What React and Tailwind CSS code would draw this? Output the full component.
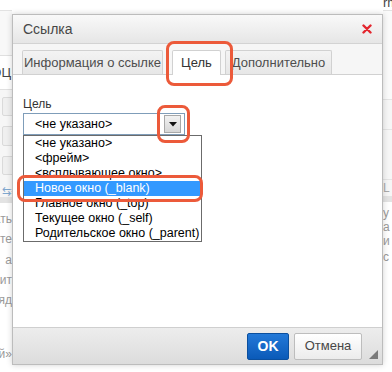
const options = [
  '<не указано>',
  '<фрейм>',
  '<всплывающее окно>',
  'Новое окно (_blank)',
  'Главное окно (_top)',
  'Текущее окно (_self)',
  'Родительское окно (_parent)',
];

function PageBehind() {
  return (
    <div className="flex h-full justify-between text-[12px] text-[#9a9a9a]">
      {/* left edge of the page, mostly under the dialog */}
      <div className="w-[12px] overflow-hidden flex flex-col">
        <div className="h-[11px] shrink-0 border-b border-[#e2e2e2] bg-white" />
        <div className="h-[45px] shrink-0 border-b border-[#e0e0e0] bg-[#f8f8f8]" />
        <div className="h-[34px] shrink-0 border-b border-[#e0e0e0] flex items-center justify-end pr-[1px] text-[13px] text-[#444] whitespace-nowrap">
          ОЦ
        </div>
        <div className="h-[107px] shrink-0 bg-[#f6f6f6] flex flex-col gap-[10px] pt-[7px] pl-[2px]">
          <div className="h-[20px] w-[12px] rounded-[2px] border border-[#dadada] bg-[#efefef]" />
          <div className="h-[20px] w-[12px] rounded-[2px] border border-[#dadada] bg-[#efefef]" />
          <div className="h-[20px] w-[12px] rounded-[2px] border border-[#dadada] bg-[#efefef]" />
          <div className="text-[11px] leading-[12px] text-[#7fa7cf]">⇆≡</div>
        </div>
        <div className="h-[6px] shrink-0 bg-[#e3e3e3]" />
        <div className="flex flex-col items-end pt-[6px] leading-[20px] whitespace-nowrap">
          <div>ать</div>
          <div>те</div>
          <div className="mt-[1px]">а</div>
          <div>нит</div>
          <div>яд</div>
          <div className="mt-[34px]">й»</div>
        </div>
      </div>

      {/* right edge of the page */}
      <div className="w-[9px] overflow-hidden flex flex-col">
        <div className="h-[11px] shrink-0 border-b border-[#e2e2e2] text-[13px] leading-[6px] text-[#444] whitespace-nowrap">
          rmatio
        </div>
        <div className="h-[89px] shrink-0 border-b border-[#e4e4e4] bg-[#fafafa]" />
        <div className="h-[30px] shrink-0 border-b border-[#e4e4e4] bg-[#f6f6f6]" />
        <div className="h-[50px] shrink-0 border-b border-[#e4e4e4] bg-[#f6f6f6]" />
        <div className="h-[16px] shrink-0 bg-[#f6f6f6] leading-[16px] text-[#aaa]">L</div>
        <div className="h-[6px] shrink-0 bg-[#e3e3e3]" />
        <div className="flex flex-col pt-[4px] leading-[14px] whitespace-nowrap">
          <div>y</div>
          <div>a</div>
          <div>и</div>
          <div className="mt-[2px]">c</div>
        </div>
      </div>
    </div>
  );
}

function Highlight({ className }) {
  return (
    <div className={`absolute border-[3px] border-[#ec5a3a] rounded-[8px] pointer-events-none ${className}`} />
  );
}

export default function App() {
  return (
    <div className="relative w-[392px] h-[372px] overflow-hidden bg-white font-['Liberation_Sans',Arial,sans-serif]">
      <PageBehind />

      {/* link dialog */}
      <div className="absolute left-[12px] top-[14px] w-[371px] h-[351px] flex flex-col border border-[#bcbcbc] bg-white shadow-[0_0_6px_rgba(0,0,0,0.18)]">
        <div className="h-[29px] shrink-0 flex items-center justify-between pl-[10px] pr-[10px] border-b border-[#d3d3d3] bg-gradient-to-b from-[#f9f9f9] to-[#e6e6e6]">
          <span className="text-[14px] text-[#474747]">Ссылка</span>
          <svg width="10" height="10" viewBox="0 0 10 10">
            <path d="M1.5 1.5 L8.5 8.5 M8.5 1.5 L1.5 8.5" stroke="#e3262e" strokeWidth="2.4" strokeLinecap="round" />
          </svg>
        </div>

        <div className="h-[31px] shrink-0 flex items-end pl-[9px] border-b border-[#d1d1d1] bg-[#f6f6f6]">
          <div className="h-[24px] w-[141px] flex items-center justify-center border border-b-0 border-[#d1d1d1] rounded-t-[2px] bg-gradient-to-b from-[#f3f3f3] to-[#e7e7e7] text-[13px] text-[#4d4d4d] whitespace-nowrap">
            Информация о ссылке
          </div>
          <div className="h-[25px] w-[49px] -mb-px ml-[9px] flex items-center justify-center border border-b-0 border-[#d1d1d1] rounded-t-[2px] bg-white text-[13px] text-[#333]">
            Цель
          </div>
          <div className="h-[24px] w-[107px] ml-[4px] flex items-center justify-center border border-b-0 border-[#d1d1d1] rounded-t-[2px] bg-gradient-to-b from-[#f3f3f3] to-[#e7e7e7] text-[13px] text-[#4d4d4d] whitespace-nowrap">
            Дополнительно
          </div>
        </div>

        <div className="flex-1 pt-[22px] pl-[10px]">
          <div className="text-[12px] leading-[14px] text-[#333] mb-[2px]">Цель</div>
          <div className="w-[162px] h-[22px] flex items-center justify-between border border-[#7f9db9] bg-white pl-[11px] pr-[3px]">
            <span className="text-[12.5px] text-black">&lt;не указано&gt;</span>
            <div className="w-[17px] h-[18px] flex items-center justify-center border border-[#a8a8a8] bg-gradient-to-b from-[#f2f2f2] to-[#d6d6d6]">
              <svg width="8" height="5" viewBox="0 0 8 5">
                <path d="M0 0 H8 L4 4.5 Z" fill="#111" />
              </svg>
            </div>
          </div>
        </div>

        <div className="h-[37px] shrink-0 relative flex items-center justify-end gap-[5px] pr-[20px] border-t border-[#cfcfcf] bg-gradient-to-b from-[#ededed] to-[#dcdcdc]">
          <button className="h-[27px] w-[42px] rounded-[2px] border border-[#0b4f9e] bg-gradient-to-b from-[#2379d8] to-[#0a5ab8] text-[14px] font-bold text-white">
            OK
          </button>
          <button className="h-[27px] w-[68px] rounded-[2px] border border-[#bdbdbd] bg-gradient-to-b from-white to-[#ececec] text-[13px] text-[#474747]">
            Отмена
          </button>
          <svg className="absolute right-[4px] bottom-[5px]" width="9" height="9" viewBox="0 0 9 9">
            <path d="M9 0 V9 H0 Z" fill="#7a7a7a" />
          </svg>
        </div>
      </div>

      {/* open native-style dropdown list */}
      <div className="absolute left-[23px] top-[135px] w-[179px] border border-[#6b6b6b] bg-white">
        {options.map((o, i) => (
          <div
            key={o}
            className={`h-[15px] pl-[11px] text-[12.5px] leading-[15px] whitespace-nowrap ${
              i === 3 ? 'bg-[#3399ff] text-white' : 'text-black'
            }`}
          >
            {o}
          </div>
        ))}
      </div>

      {/* orange callouts */}
      <Highlight className="left-[166px] top-[41px] w-[67px] h-[45px]" />
      <Highlight className="left-[157px] top-[105px] w-[33px] h-[38px]" />
      <Highlight className="left-[17px] top-[175px] w-[186px] h-[27px]" />
    </div>
  );
}
